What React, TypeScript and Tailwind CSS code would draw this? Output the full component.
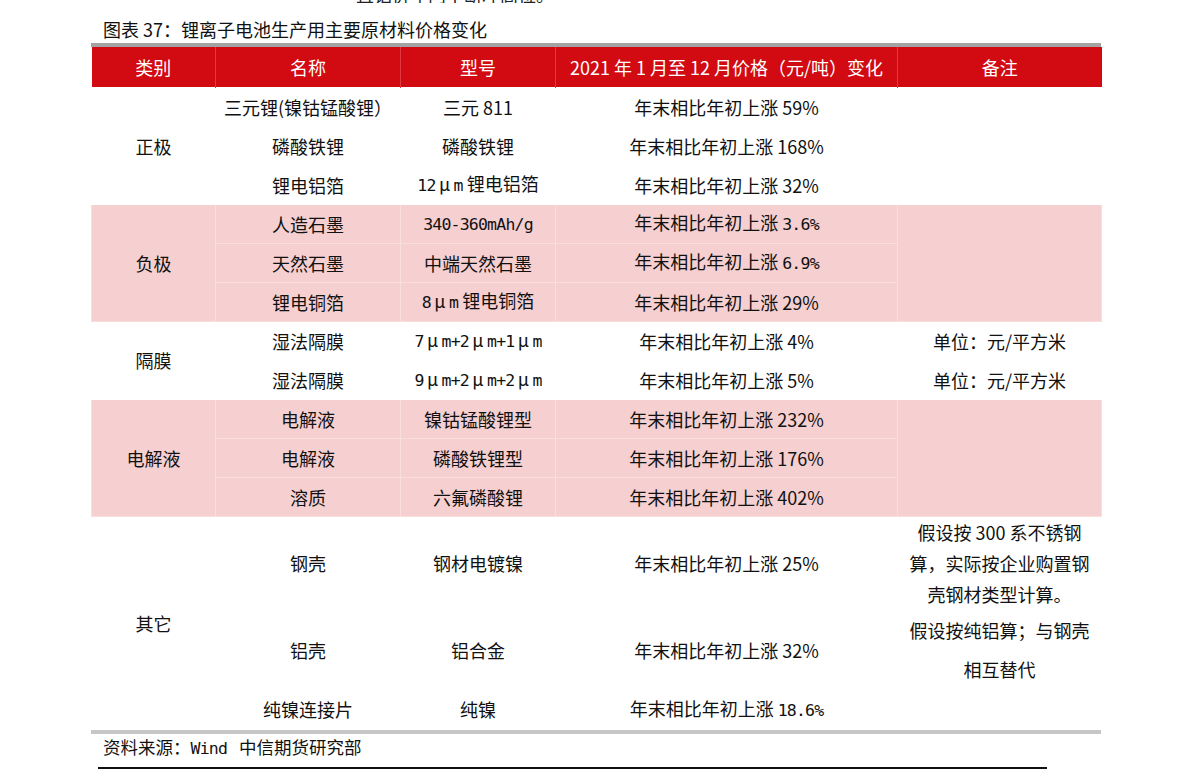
import React from "react";

const cjk = "font-['Noto_Sans_CJK_SC',sans-serif]";
const mono = "font-['DejaVu_Sans_Mono','Noto_Sans_CJK_SC',monospace] text-[16.5px] tracking-[-0.8px]";

function M({ children }: { children: React.ReactNode }) {
  return <span className={mono}>{children}</span>;
}

function Mu() {
  return <span className="inline-block w-[18px] text-center">μ</span>;
}

export default function App() {
  const pink = "bg-[#f6cfd0] border border-[#fadede]";
  const white = "bg-white border border-white";
  const td = "text-center align-middle p-0";

  const rise = (v: React.ReactNode) => <>年末相比年初上涨 {v}</>;

  return (
    <div className={`w-[1191px] h-[777px] bg-white overflow-hidden text-[#111] ${cjk}`}>
      {/* cut-off line from previous page */}
      <div className="h-[3px] overflow-hidden flex items-end pl-[356px]">
        <span className="text-[18px] leading-[18px] text-[#222]">且铝价年内不断冲高位。</span>
      </div>

      {/* Title */}
      <div className="pl-[103px] pt-[15px] text-[18px] leading-[22px]">
        图表 37：锂离子电池生产用主要原材料价格变化
      </div>

      {/* Table */}
      <div className="ml-[91px] w-[1010px] mt-[3px]">
        <div className="h-[4px] bg-[#a3a3a3]" />
        <table className="w-full table-fixed border-collapse text-[18px] leading-[22px]">
          <colgroup>
            <col className="w-[124px]" />
            <col className="w-[185px]" />
            <col className="w-[155px]" />
            <col className="w-[342px]" />
            <col className="w-[204px]" />
          </colgroup>
          <thead>
            <tr className="h-[40px] bg-[#d20a11] text-white">
              <th className={`${td} font-normal`}>类别</th>
              <th className={`${td} font-normal border-l border-[#dd3b41]`}>名称</th>
              <th className={`${td} font-normal border-l border-[#dd3b41]`}>型号</th>
              <th className={`${td} font-normal border-l border-[#dd3b41]`}>2021 年 1 月至 12 月价格（元/吨）变化</th>
              <th className={`${td} font-normal border-l border-[#dd3b41]`}>备注</th>
            </tr>
          </thead>
          <tbody>
            {/* 正极 */}
            <tr className="h-[39px]">
              <td rowSpan={3} className={`${td} ${white}`}>正极</td>
              <td className={`${td} ${white}`}>三元锂(镍钴锰酸锂）</td>
              <td className={`${td} ${white}`}>三元 811</td>
              <td className={`${td} ${white}`}>{rise("59%")}</td>
              <td rowSpan={3} className={`${td} ${white}`} />
            </tr>
            <tr className="h-[39px]">
              <td className={`${td} ${white}`}>磷酸铁锂</td>
              <td className={`${td} ${white}`}>磷酸铁锂</td>
              <td className={`${td} ${white}`}>{rise("168%")}</td>
            </tr>
            <tr className="h-[39px]">
              <td className={`${td} ${white}`}>锂电铝箔</td>
              <td className={`${td} ${white}`}>
                <M>12</M><Mu /><M>m</M> 锂电铝箔
              </td>
              <td className={`${td} ${white}`}>{rise("32%")}</td>
            </tr>

            {/* 负极 */}
            <tr className="h-[39px]">
              <td rowSpan={3} className={`${td} ${pink}`}>负极</td>
              <td className={`${td} ${pink}`}>人造石墨</td>
              <td className={`${td} ${pink}`}><M>340-360mAh/g</M></td>
              <td className={`${td} ${pink}`}>{rise(<M>3.6%</M>)}</td>
              <td rowSpan={3} className={`${td} ${pink}`} />
            </tr>
            <tr className="h-[39px]">
              <td className={`${td} ${pink}`}>天然石墨</td>
              <td className={`${td} ${pink}`}>中端天然石墨</td>
              <td className={`${td} ${pink}`}>{rise(<M>6.9%</M>)}</td>
            </tr>
            <tr className="h-[39px]">
              <td className={`${td} ${pink}`}>锂电铜箔</td>
              <td className={`${td} ${pink}`}>
                <M>8</M><Mu /><M>m</M> 锂电铜箔
              </td>
              <td className={`${td} ${pink}`}>{rise("29%")}</td>
            </tr>

            {/* 隔膜 */}
            <tr className="h-[39px]">
              <td rowSpan={2} className={`${td} ${white}`}>隔膜</td>
              <td className={`${td} ${white}`}>湿法隔膜</td>
              <td className={`${td} ${white}`}>
                <M>7</M><Mu /><M>m+2</M><Mu /><M>m+1</M><Mu /><M>m</M>
              </td>
              <td className={`${td} ${white}`}>{rise("4%")}</td>
              <td className={`${td} ${white}`}>单位：元/平方米</td>
            </tr>
            <tr className="h-[39px]">
              <td className={`${td} ${white}`}>湿法隔膜</td>
              <td className={`${td} ${white}`}>
                <M>9</M><Mu /><M>m+2</M><Mu /><M>m+2</M><Mu /><M>m</M>
              </td>
              <td className={`${td} ${white}`}>{rise("5%")}</td>
              <td className={`${td} ${white}`}>单位：元/平方米</td>
            </tr>

            {/* 电解液 */}
            <tr className="h-[39px]">
              <td rowSpan={3} className={`${td} ${pink}`}>电解液</td>
              <td className={`${td} ${pink}`}>电解液</td>
              <td className={`${td} ${pink}`}>镍钴锰酸锂型</td>
              <td className={`${td} ${pink}`}>{rise("232%")}</td>
              <td rowSpan={3} className={`${td} ${pink}`} />
            </tr>
            <tr className="h-[39px]">
              <td className={`${td} ${pink}`}>电解液</td>
              <td className={`${td} ${pink}`}>磷酸铁锂型</td>
              <td className={`${td} ${pink}`}>{rise("176%")}</td>
            </tr>
            <tr className="h-[39px]">
              <td className={`${td} ${pink}`}>溶质</td>
              <td className={`${td} ${pink}`}>六氟磷酸锂</td>
              <td className={`${td} ${pink}`}>{rise("402%")}</td>
            </tr>

            {/* 其它 */}
            <tr className="h-[94px]">
              <td rowSpan={3} className={`${td} ${white}`}>其它</td>
              <td className={`${td} ${white}`}>钢壳</td>
              <td className={`${td} ${white}`}>钢材电镀镍</td>
              <td className={`${td} ${white}`}>{rise("25%")}</td>
              <td className={`${td} ${white} leading-[31px]`}>
                假设按 300 系不锈钢
                <br />
                算，实际按企业购置钢
                <br />
                壳钢材类型计算。
              </td>
            </tr>
            <tr className="h-[77px]">
              <td className={`${td} ${white}`}>铝壳</td>
              <td className={`${td} ${white}`}>铝合金</td>
              <td className={`${td} ${white}`}>{rise("32%")}</td>
              <td className={`${td} ${white} leading-[39px]`}>
                假设按纯铝算；与钢壳
                <br />
                相互替代
              </td>
            </tr>
            <tr className="h-[40px]">
              <td className={`${td} ${white}`}>纯镍连接片</td>
              <td className={`${td} ${white}`}>纯镍</td>
              <td className={`${td} ${white}`}>{rise(<M>18.6%</M>)}</td>
              <td className={`${td} ${white}`} />
            </tr>
          </tbody>
        </table>
        <div className="h-[4px] bg-[#c6c6c6]" />
      </div>

      {/* Source */}
      <div className="h-[28px] flex items-center pl-[103px] text-[17.5px]">
        <span>
          资料来源：<M>Wind</M>
          <span className="ml-[12px]">中信期货研究部</span>
        </span>
      </div>
      <div className="ml-[98px] mt-[5px] w-[949px] h-[2px] bg-[#111]" />
    </div>
  );
}
